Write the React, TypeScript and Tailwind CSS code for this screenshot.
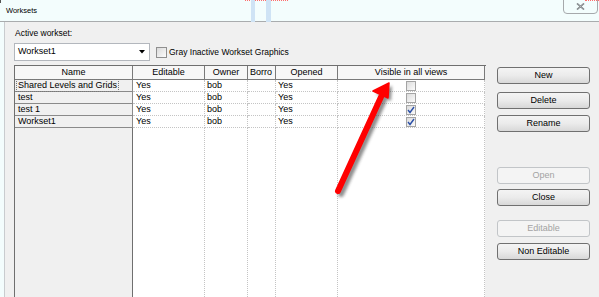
import React from "react";

const cols = [
  { w: 118, label: "Name", align: "center" },
  { w: 72, label: "Editable", align: "center" },
  { w: 43, label: "Owner", align: "center" },
  { w: 28, label: "Borro", align: "left" },
  { w: 62, label: "Opened", align: "center" },
  { w: 147, label: "Visible in all views", align: "center" },
];

const rows = [
  { name: "Shared Levels and Grids", vis: false, focus: true },
  { name: "test", vis: false },
  { name: "test 1", vis: true },
  { name: "Workset1", vis: true },
];

function Check({ checked }: { checked: boolean }) {
  return (
    <div className="w-[10px] h-[10px] border border-[#a4a4a4] bg-gradient-to-br from-[#dcdcdc] to-[#fbfbfb] flex items-center justify-center">
      {checked && (
        <svg width="8" height="8" viewBox="0 0 8 8">
          <path d="M1 4 L3 6.5 L7 1" stroke="#2a4fa8" strokeWidth="1.4" fill="none" />
        </svg>
      )}
    </div>
  );
}

function Btn({ label, disabled }: { label: string; disabled?: boolean }) {
  return (
    <div
      className={
        disabled
          ? "w-[93px] h-[17px] rounded-[3px] border border-[#c2c5c8] bg-[#f4f4f4] text-[#a3a3a3] flex items-center justify-center text-[9px]"
          : "w-[93px] h-[17px] rounded-[3px] border border-[#707070] bg-gradient-to-b from-[#f4f4f4] via-[#ebebeb] to-[#d8d8d8] text-black flex items-center justify-center text-[9px]"
      }
    >
      {label}
    </div>
  );
}

export default function App() {
  return (
    <div
      className="relative w-[599px] h-[297px] overflow-hidden bg-[#f3fdfd] text-black"
      style={{ fontFamily: '"Liberation Sans", Arial, sans-serif' }}
    >
      {/* title strip */}
      <div className="relative h-[22px] border-b border-[#a9acae]">
        <div className="absolute left-0 top-0 w-[1px] h-[3px] bg-[#555]" />
        <div className="absolute left-[6px] top-[6px] text-[7.5px] leading-[10px]">Worksets</div>
        <div className="absolute left-[245px] top-0 w-[43px] border-t border-dotted border-[#ff6b6b]" />
        <div className="absolute left-[251px] top-0 w-[4px] h-[22px] bg-[#cfe3f5]" />
        <div className="absolute left-[266px] top-0 w-[5px] h-[22px] bg-[#cfe3f5]" />
        <div className="absolute left-[585px] top-0 w-[14px] border-t border-dotted border-[#ff6b6b]" />
        <div className="absolute left-[563px] top-[-1px] w-[35px] h-[15px] border border-[#a6a9ac] rounded-b-[4px] flex items-center justify-center">
          <svg width="9" height="7" viewBox="0 0 9 7">
            <path d="M1 0.5 L8 6.5 M8 0.5 L1 6.5" stroke="#6b6f73" strokeWidth="1.6" />
            <path d="M1 0.5 L8 6.5 M8 0.5 L1 6.5" stroke="#d0d3d6" strokeWidth="0.5" />
          </svg>
        </div>
      </div>

      {/* dialog body */}
      <div className="ml-[4px] h-[275px] bg-[#f0f0f0] border-l border-[#c9cccf] flex pl-[9px] pt-[5px]">
        {/* left column */}
        <div className="w-[472px] flex flex-col">
          <div className="text-[8.5px] leading-[12px] pl-[1px]">Active workset:</div>
          <div className="mt-[4px] flex items-center h-[18px]">
            <div className="w-[136px] h-[18px] bg-white border border-[#b3b7bd] flex items-center justify-between pl-[3px] pr-[4px] text-[9px]">
              <span>Workset1</span>
              <svg width="6" height="4" viewBox="0 0 6 4">
                <path d="M0 0 H6 L3 3.5 Z" fill="#000" />
              </svg>
            </div>
            <div className="ml-[6px] w-[11px] h-[11px] border border-[#8f8f8f] bg-gradient-to-br from-[#dadada] to-[#fcfcfc]" />
            <div className="ml-[2px] text-[8.5px] leading-[12px]">Gray Inactive Workset Graphics</div>
          </div>

          {/* table */}
          <div className="mt-[4px] h-[240px] border-l border-t border-[#6f6f6f] flex flex-col text-[9px] leading-[11px]">
            {/* header */}
            <div className="flex h-[14px]">
              {cols.map((c, i) => (
                <div
                  key={i}
                  style={{ width: c.w }}
                  className={
                    (c.align === "center" ? "justify-center " : "justify-start pl-[2px] ") +
                    "h-[14px] flex items-center overflow-hidden whitespace-nowrap bg-[#f7f7f7] border-r border-b border-[#7a7a7a]"
                  }
                >
                  {c.label}
                </div>
              ))}
            </div>
            {rows.map((r, ri) => (
              <div key={ri} className="flex h-[12px]">
                <div
                  style={{ width: cols[0].w }}
                  className="h-[12px] bg-[#f0f0f0] border-r border-b border-[#8a8a8a] pl-[3px] flex items-center whitespace-nowrap"
                >
                  <span className={r.focus ? "outline outline-1 outline-dotted outline-[#777] px-[1px] -ml-[1px]" : ""}>{r.name}</span>
                </div>
                <div style={{ width: cols[1].w }} className="h-[12px] bg-white border-r border-b border-dotted border-[#c4c4c4] pl-[3px] flex items-center">Yes</div>
                <div style={{ width: cols[2].w }} className="h-[12px] bg-white border-r border-b border-dotted border-[#c4c4c4] pl-[2px] flex items-center">bob</div>
                <div style={{ width: cols[3].w }} className="h-[12px] bg-white border-r border-b border-dotted border-[#c4c4c4]" />
                <div style={{ width: cols[4].w }} className="h-[12px] bg-white border-r border-b border-dotted border-[#c4c4c4] pl-[2px] flex items-center">Yes</div>
                <div style={{ width: cols[5].w }} className="h-[12px] bg-white border-r border-b border-dotted border-[#c4c4c4] flex items-center justify-center">
                  <Check checked={r.vis} />
                </div>
              </div>
            ))}
            {/* remaining area */}
            <div className="flex flex-1">
              <div style={{ width: cols[0].w }} className="bg-[#f0f0f0] border-r border-[#6f6f6f]" />
              <div style={{ width: cols[1].w }} className="bg-white border-r border-dotted border-[#c4c4c4]" />
              <div style={{ width: cols[2].w }} className="bg-white border-r border-dotted border-[#c4c4c4]" />
              <div style={{ width: cols[3].w }} className="bg-white border-r border-dotted border-[#c4c4c4]" />
              <div style={{ width: cols[4].w }} className="bg-white border-r border-dotted border-[#c4c4c4]" />
              <div style={{ width: cols[5].w }} className="bg-white border-r border-dotted border-[#c4c4c4]" />
            </div>
          </div>
        </div>

        {/* right buttons */}
        <div className="ml-[11px] pt-[40px] flex flex-col">
          <Btn label="New" />
          <div className="mt-[8px]"><Btn label="Delete" /></div>
          <div className="mt-[6px]"><Btn label="Rename" /></div>
          <div className="mt-[35px]"><Btn label="Open" disabled /></div>
          <div className="mt-[5px]"><Btn label="Close" /></div>
          <div className="mt-[14px]"><Btn label="Editable" disabled /></div>
          <div className="mt-[6px]"><Btn label="Non Editable" /></div>
        </div>
      </div>

      {/* red arrow annotation */}
      <svg className="absolute left-0 top-0 pointer-events-none" width="599" height="297" viewBox="0 0 599 297">
        <defs>
          <filter id="sh" x="-50%" y="-50%" width="200%" height="200%">
            <feGaussianBlur stdDeviation="1.6" />
          </filter>
        </defs>
        <g transform="translate(3,3)" filter="url(#sh)" opacity="0.55">
          <path d="M338 191 L381 97" stroke="#333" strokeWidth="6" strokeLinecap="round" />
          <path d="M389 83 L373 91 L388 98 Z" fill="#333" />
        </g>
        <path d="M338 191 L381 97" stroke="#ff0000" strokeWidth="6" strokeLinecap="round" />
        <path d="M389 83 L373 91 L388 98 Z" fill="#ff0000" stroke="#ff0000" strokeWidth="1.5" strokeLinejoin="round" />
      </svg>
    </div>
  );
}
